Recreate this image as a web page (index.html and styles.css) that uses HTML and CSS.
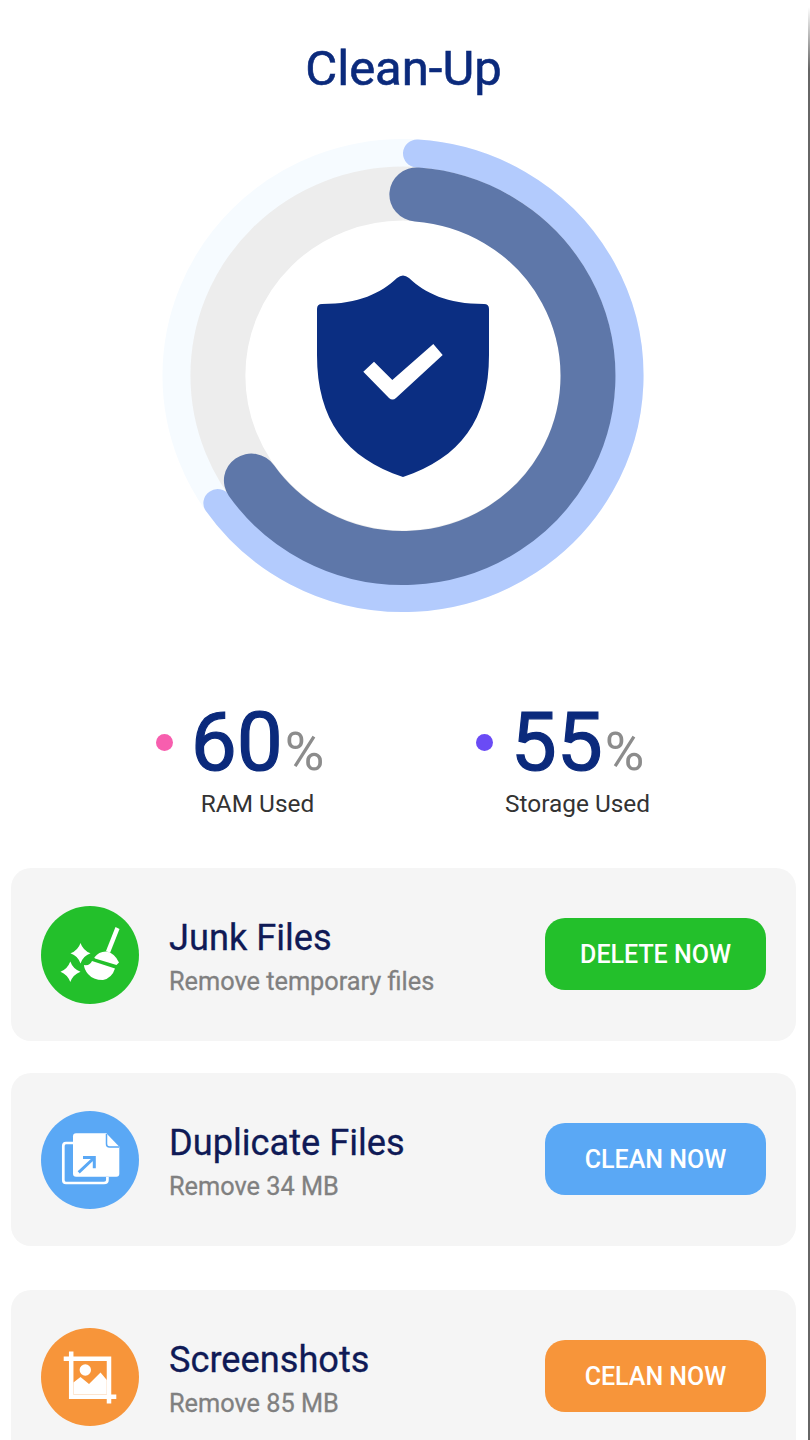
FILE: index.html
```html
<!DOCTYPE html>
<html lang="en">

<head>
    <meta charset="UTF-8">
    <meta name="viewport" content="width=device-width, initial-scale=1.0">
    <title>Clean-Up</title>
    <link rel="stylesheet" href="styles.css">
</head>

<body>
    <div class="screen">
        <h1 class="title">Clean-Up</h1>

        <svg class="gauge" width="490" height="480" viewBox="158 135 490 480">
            <g transform="translate(403 375.5) scale(1.017 1)" fill="none">
                <circle r="222.5" stroke="#f6fbff" stroke-width="28" />
                <circle r="182" stroke="#ededed" stroke-width="54" />
                <path d="M14 -222 A222.5 222.5 0 1 1 -182.3 127.6" stroke="#b3cbfd" stroke-width="28" stroke-linecap="round" />
                <path d="M13.6 -181 A182 182 0 1 1 -149.1 105" stroke="#5e77a9" stroke-width="54" stroke-linecap="round" />
            </g>
            <path fill="#0b2e82" d="M397 278 Q403 273 409 278 C425 293 447 304 484 304 Q489 304 489 309 L489 355 C489 420 460 458 403 477 C346 458 317 420 317 355 L317 309 Q317 304 322 304 C359 304 381 293 397 278 Z" />
            <path fill="#fff" d="M363.3 371.7 L374 361.7 L392.3 380 L433.3 344 L442.7 355 L396 398 Q392.5 401 389 398 Z" />
        </svg>

        <div class="stats">
            <div class="stat">
                <span class="dot dot-pink"></span>
                <div class="stat-body">
                    <div class="stat-top">
                        <span class="stat-num">60</span><span class="stat-pct">%</span>
                    </div>
                    <div class="stat-label">RAM Used</div>
                </div>
            </div>
            <div class="stat">
                <span class="dot dot-purple"></span>
                <div class="stat-body">
                    <div class="stat-top">
                        <span class="stat-num">55</span><span class="stat-pct">%</span>
                    </div>
                    <div class="stat-label">Storage Used</div>
                </div>
            </div>
        </div>

        <div class="card">
            <div class="icon icon-green">
                <svg width="98" height="98" viewBox="0 0 98 98" fill="#fff">
                    <path d="M74.500 21 L78.500 23 L69 47 L65 45 Z" />
                    <path d="M53.300 51.500 Q58 45 66 45.500 Q74 47.500 78 56.500 L75.500 59 L54 52.500 Z" />
                    <path d="M51 55 L74 62.500 Q71 72 62 74 Q52 74 47 68 Q43 63 43 59 Q49 60 51 55 Z" />
                    <path d="M39.500 37 Q42 44.500 49.500 47.300 Q42 50 39.500 57.500 Q37 50 29.500 47.300 Q37 44.500 39.500 37 Z" />
                    <path d="M29.300 55.500 Q32 63 39.500 65.700 Q32 68.500 29.300 76 Q26.500 68.500 19.500 65.700 Q26.500 63 29.300 55.500 Z" />
                </svg>
            </div>
            <div class="info">
                <div class="info-title">Junk Files</div>
                <div class="info-sub">Remove temporary files</div>
            </div>
            <button class="btn btn-green">DELETE NOW</button>
        </div>

        <div class="card">
            <div class="icon icon-blue">
                <svg width="98" height="98" viewBox="0 0 98 98">
                    <path d="M32 32 H25 Q22.300 32 22.300 35 V69 Q22.300 72 25 72 H63 Q66.400 72 66.400 69 V66" fill="none" stroke="#fff" stroke-width="2.700" />
                    <path fill="#fff" d="M35 22.300 Q32 22.300 32 25.300 V62.700 Q32 65.700 35 65.700 H75.300 Q78.300 65.700 78.300 62.700 V35.700 L65.300 22.300 Z" />
                    <path d="M65.500 23 V33 Q65.500 36 68.500 36 H78" fill="none" stroke="#5aa8f5" stroke-width="1.500" />
                    <path d="M37.700 61.300 L53 47 M42 46.500 H53.300 V57.300" fill="none" stroke="#5aa8f5" stroke-width="3" />
                </svg>
            </div>
            <div class="info">
                <div class="info-title">Duplicate Files</div>
                <div class="info-sub">Remove 34 MB</div>
            </div>
            <button class="btn btn-blue">CLEAN NOW</button>
        </div>

        <div class="card card-last">
            <div class="icon icon-orange">
                <svg width="98" height="98" viewBox="0 0 98 98">
                    <path d="M30.200 23.400 V68.700 H75.300 M22.700 30.700 H68 V75.400" fill="none" stroke="#fff" stroke-width="4.500" />
                    <path fill="#fff" d="M32.400 66.500 V54.500 L39.500 49 L48 56 L59.500 44.500 L65.800 52 V66.500 Z" />
                    <circle cx="44.300" cy="42" r="5.700" fill="#fff" />
                </svg>
            </div>
            <div class="info">
                <div class="info-title">Screenshots</div>
                <div class="info-sub">Remove 85 MB</div>
            </div>
            <button class="btn btn-orange">CELAN NOW</button>
        </div>
    </div>
</body>

</html>
```

FILE: styles.css
```css
* {
    box-sizing: border-box;
}

body {
    margin: 0;
    background-color: #fff;
    font-family: Roboto, sans-serif;
}

.screen {
    width: 810px;
    height: 1440px;
    overflow: hidden;
    padding: 0 12px 0 11px;
    border-right: 2px solid;
    border-image: linear-gradient(to bottom, #fff 8px, #666 70px) 1;
}

.title {
    margin: 0;
    padding-top: 41px;
    height: 135px;
    font-size: 49px;
    line-height: 56px;
    font-weight: 400;
    -webkit-text-stroke: 0.6px #0b2a7c;
    color: #0b2a7c;
    text-align: center;
}

.gauge {
    display: block;
    margin-left: 147px;
}

.stats {
    display: flex;
    margin-top: 86px;
    height: 167px;
}

.stat {
    display: flex;
    width: 322px;
    margin-left: 145px;
}

.stat + .stat {
    margin-left: 0;
}

.dot {
    width: 17px;
    height: 17px;
    margin-top: 33px;
    margin-right: 12px;
    border-radius: 50%;
    flex-shrink: 0;
}

.dot-pink {
    background-color: #f75eae;
}

.dot-purple {
    background-color: #6a4bf5;
}

.stat-body {
    width: 145px;
    text-align: center;
}

.stat-top {
    display: flex;
    justify-content: center;
    align-items: baseline;
    height: 78px;
}

.stat-num {
    font-size: 82px;
    line-height: 82px;
    font-weight: 400;
    -webkit-text-stroke: 1.2px #0b2a7c;
    color: #0b2a7c;
}

.stat-pct {
    font-size: 54px;
    color: #8c8c8c;
    margin-left: 2px;
}

.stat-label {
    margin-top: 10px;
    font-size: 24.400px;
    line-height: 30px;
    color: #333;
    white-space: nowrap;
}

.card {
    display: flex;
    align-items: center;
    height: 173px;
    margin-bottom: 32px;
    padding: 0 30px;
    background-color: #f5f5f5;
    border-radius: 20px;
}

.card-last {
    margin-top: 44px;
}

.icon {
    width: 98px;
    height: 98px;
    flex-shrink: 0;
    border-radius: 50%;
}

.icon svg {
    display: block;
}

.icon-green,
.btn-green {
    background-color: #23c02b;
}

.icon-blue,
.btn-blue {
    background-color: #5aa8f5;
}

.icon-orange,
.btn-orange {
    background-color: #f7953a;
}

.info {
    flex: 1;
    padding-left: 30px;
    padding-top: 4px;
}

.info-title {
    font-size: 36.200px;
    line-height: 44px;
    -webkit-text-stroke: 0.3px #0f1a56;
    color: #0f1a56;
}

.info-sub {
    margin-top: 6px;
    font-size: 25.300px;
    line-height: 32px;
    -webkit-text-stroke: 0.3px #808080;
    color: #808080;
}

.btn {
    width: 221px;
    height: 72px;
    margin-bottom: 2px;
    padding-top: 2px;
    border: none;
    border-radius: 20px;
    color: #fff;
    font-family: Roboto, sans-serif;
    font-size: 25px;
    font-weight: 500;
    cursor: pointer;
}
```
